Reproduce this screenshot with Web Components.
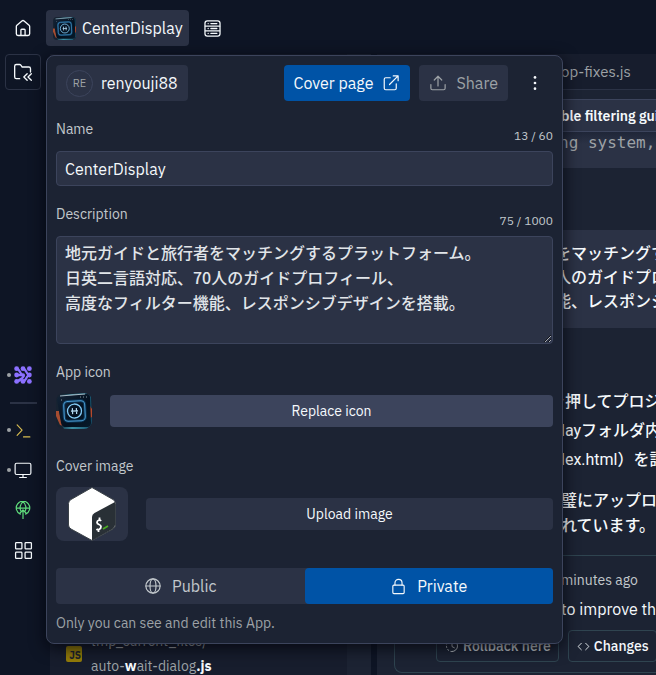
<!DOCTYPE html>
<html lang="en">
<head>
<meta charset="utf-8">
<title>CenterDisplay</title>
<style>
:root{--root:#0e1525;--panel:#1c2333;--raised:#2b3245;--line:#3c445c;--text:#f5f9fc;--dim:#c2c8cc;--faint:#9da2a6;--blue:#0053a6}
html,body{margin:0;height:100%;overflow:hidden;background:var(--root)}
body{font:16px/24px "IBM Plex Sans",Roboto,"Noto Sans CJK JP",sans-serif;color:var(--text)}
</style>
</head>
<body>
<app-shell></app-shell>
<script>
const base = `<style>
*{box-sizing:border-box}
button,input,textarea{font:inherit;color:inherit;margin:0}
button{border:0;background:none;padding:0;display:flex;align-items:center;justify-content:center;cursor:pointer}
svg{display:block;flex:none}
</style>`;
const define = (name, html) => customElements.define(name, class extends HTMLElement {
  constructor() {
    super();
    this.attachShadow({ mode: 'open' }).innerHTML = base + html;
  }
});

const icons = {
  home: '<path d="M4 10.2a2 2 0 0 1 .7-1.5l6-5.2a2 2 0 0 1 2.6 0l6 5.2a2 2 0 0 1 .7 1.5V19a2 2 0 0 1-2 2H6a2 2 0 0 1-2-2zM9.5 21v-6.5a1 1 0 0 1 1-1h3a1 1 0 0 1 1 1V21"/>',
  server: '<rect x="2.5" y="2.5" width="19" height="19" rx="3"/><path d="M3 9h18M3 15h18M6.5 5.8h.1M10 5.8h7.500M6.500 12h.1M10 12h7.500M6.500 18.2h.1M10 18.2h7.500"/>',
  folder: '<path d="M8 20H4a2 2 0 0 1-2-2V5a2 2 0 0 1 2-2h3.8a2 2 0 0 1 1.6.8L11 6h8a2 2 0 0 1 2 2v4M17 14l-4 4 4 4M22 14l-4 4 4 4"/>',
  external: '<path d="M11 5H5a2 2 0 0 0-2 2v12a2 2 0 0 0 2 2h12a2 2 0 0 0 2-2v-6M15 2.5h6.5V9M21.500 2.500 10 14"/>',
  share: '<path d="M2.500 14v5a2 2 0 0 0 2 2h15a2 2 0 0 0 2-2v-5M12 16V3M7 8l5-5 5 5"/>',
  globe: '<circle cx="12" cy="12" r="9.500"/><ellipse cx="12" cy="12" rx="4" ry="9.500"/><path d="M2.500 12h19"/>',
  lock: '<rect x="4" y="10" width="16" height="12" rx="1.500"/><path d="M7 10V7a5 5 0 0 1 10 0v3"/>',
  dots: '<g fill="currentColor" stroke="none"><circle cx="12" cy="4.500" r="1.800"/><circle cx="12" cy="12" r="1.800"/><circle cx="12" cy="19.500" r="1.800"/></g>',
  shell: '<path d="m3 4 7 7.500L3 19M12 21h9"/>',
  monitor: '<rect x="1.500" y="3" width="21" height="15" rx="2"/><path d="M12 18v4M7.500 22h9"/>',
  deploy: '<path d="M8.500 17.500A9 9 0 1 1 15.500 17.500M3 9.500h18M9.500 14c-2.500-4-1.500-10 2.500-13M14.500 14c2.500-4 1.500-10-2.500-13M12 24V12M8 16l4-4 4 4"/>',
  grid: '<rect x="2" y="2" width="8" height="8" rx="1"/><rect x="14" y="2" width="8" height="8" rx="1"/><rect x="2" y="14" width="8" height="8" rx="1"/><rect x="14" y="14" width="8" height="8" rx="1"/>',
  code: '<path d="m8 6-6 6 6 6M16 6l6 6-6 6"/>',
  history: '<path d="M12 2.500a9.500 9.500 0 0 1 0 19"/><path d="M12 21.500a9.500 9.500 0 0 1 0-19" stroke-dasharray="2 4"/><path d="M12 7v6l4 2"/>',
  agent: '<g stroke-width="3"><path d="M3.500 3.500C8 3.500 8 12 12 12S8 20.500 3.500 20.500M12 3.500c4.500 0 4.500 8.500 8.500 8.500-4 0-4 8.500-8.500 8.500M3.500 12H12"/></g><g fill="currentColor" stroke="none"><circle cx="3.500" cy="3.500" r="3.200"/><circle cx="12" cy="3.500" r="3.200"/><circle cx="20.500" cy="3.500" r="3.200"/><circle cx="3.500" cy="12" r="3.200"/><circle cx="12" cy="12" r="2.500"/><circle cx="20.500" cy="12" r="3.200"/><circle cx="3.500" cy="20.500" r="3.200"/><circle cx="12" cy="20.500" r="3.200"/><circle cx="20.500" cy="20.500" r="3.200"/></g>'
};
customElements.define('ui-icon', class extends HTMLElement {
  constructor() { super(); this.attachShadow({ mode: 'open' }); }
  connectedCallback() {
    const size = this.getAttribute('size') || 20;
    this.shadowRoot.innerHTML = `<style>:host{display:block;flex:none}svg{display:block}</style>
    <svg aria-hidden="true" width="${size}" height="${size}" viewBox="0 0 24 24" fill="none" stroke="currentColor" stroke-width="1.600" stroke-linecap="round" stroke-linejoin="round">${icons[this.getAttribute('name')]}</svg>`;
  }
});

define('app-picture', `<style>:host{display:block;flex:none;width:36px;height:36px;border-radius:8px;overflow:hidden}svg{width:100%;height:100%}</style>
<svg viewBox="0 0 36 36" aria-hidden="true">
<defs><linearGradient id="tile" x1="0" y1="0" x2="1" y2="1"><stop offset="0" stop-color="#142437"/><stop offset=".6" stop-color="#03101f"/><stop offset="1" stop-color="#071a2a"/></linearGradient>
<linearGradient id="edge" x1="0" x2="1"><stop offset="0" stop-color="#10283a"/><stop offset=".4" stop-color="#3c8fa3"/><stop offset="1" stop-color="#15506b"/></linearGradient></defs>
<rect width="36" height="36" fill="#172331"/>
<path d="M4 2 30 0l5 3 1 28-5 5H8l-5-8z" fill="url(#edge)"/>
<path d="M0 18h3l2 9 3 6-4-1-4-9z" fill="#a64c30"/><path d="M34 13l2 3v8l-2 1z" fill="#b5492c"/>
<path d="M1 7q0-3 3-4L31 1q3 0 3 3l1 26q0 3-3 4L9 34q-3 0-4-4z" fill="url(#tile)"/>
<path d="M4 3 29 1" stroke="#a9bac5" stroke-width="1"/>
<g fill="none" transform="rotate(-3 19 18)"><rect x="8" y="8" width="21" height="20" rx="4" stroke="#1677ba" stroke-width="3" opacity=".35"/><rect x="8" y="8" width="21" height="20" rx="4" stroke="#4d9bd0"/><circle cx="18.500" cy="18" r="7" stroke="#82c9f3" stroke-width="1.300"/><path d="M16.500 15v6M20.500 15v6M15 18h7" stroke="#b5dbf2" stroke-width="1.200"/></g>
<path d="M24 4h1M27 4h1M30 4h1M5 7h1" stroke="#8395a1"/>
</svg>`);

define('bash-cover', `<style>:host{display:flex;justify-content:center;flex:none;width:72px;height:54px;border-radius:8px;background:var(--raised)}</style>
<svg width="48" height="54" viewBox="0 0 48 54" aria-hidden="true"><path d="M24 .5 45 12.500q2.500 1.500 2.500 4V38q0 2.500-2.500 4L24 53.500 3 42Q.5 40.500.5 38V16.500q0-2.500 2.500-4z" fill="#fff" stroke="#3b4248"/><path d="M47 15v23q0 2.500-2.500 4L24 53.500V30q0-2.500 2.500-4z" fill="#293036"/><path d="m35 42 5-3" stroke="#4cad24" stroke-width="1.800"/><path d="M33 34c-1-2-4-.5-4 1.500 0 2.500 4 1.500 4 4s-3 4-4.500 2.500M31.500 30.500v3M30.500 42v3" fill="none" stroke="#fff" stroke-width="1.800"/></svg>`);

define('top-bar', `<style>
:host{display:flex;height:54px;align-items:flex-start;padding:10px 0 0 15px}
button{height:36px}.home{width:16px}.app{background:var(--raised);border-radius:4px;gap:6px;padding:0 6px 0 7px;margin-left:15px}.server{margin-left:14px}
app-picture{width:23px;height:23px;border-radius:4px}</style>
<button class="home" aria-label="Home"><ui-icon name="home"></ui-icon></button>
<button class="app"><app-picture></app-picture>CenterDisplay</button>
<button class="server" aria-label="Storage"><ui-icon name="server" size="19"></ui-icon></button>`);

define('tool-rail', `<style>
:host{display:flex;flex-direction:column;align-items:center;width:46px;flex:none}
.files{width:36px;height:36px;border:1px solid var(--raised);border-radius:4px;margin-bottom:265px}
.tool{width:46px;height:40px;display:grid;grid-template-columns:6px 20px;justify-content:start;justify-items:center;align-items:center;padding-left:7px}
.tool::before{content:"";width:4px;height:4px;justify-self:start}.dot::before{border-radius:50%;background:var(--faint)}
hr{width:27px;height:2px;border:0;background:var(--raised);margin:7px 0 6px}
.agent{color:#8b70ff}.shell{color:#d8bd50}.deploy{color:#5fdc7b}</style>
<button class="files" aria-label="Files"><ui-icon name="folder"></ui-icon></button>
<button class="tool dot agent" aria-label="Agent"><ui-icon name="agent" size="18"></ui-icon></button><hr>
<button class="tool dot shell" aria-label="Shell"><ui-icon name="shell" size="17"></ui-icon></button>
<button class="tool dot" aria-label="Preview"><ui-icon name="monitor" size="18"></ui-icon></button>
<button class="tool deploy" aria-label="Deploy"><ui-icon name="deploy" size="18"></ui-icon></button>
<button class="tool" aria-label="All tools"><ui-icon name="grid" size="19"></ui-icon></button>`);

define('file-pane', `<style>
:host{display:block;flex:1;min-width:0;margin:0 6px 0 4px;background:linear-gradient(to left,var(--panel) 24px,#171d2d 24px);font-size:14px;line-height:25px;color:var(--faint);padding:575px 0 0 16px;overflow:hidden}
.row{display:flex;align-items:center;gap:9px}.js{width:16px;height:16px;border-radius:2px;background:#947c09;color:#20242b;font-size:10px;line-height:20px;text-align:right;font-weight:700;padding-right:1px}b{color:var(--text)}</style>
<div class="row"><span class="js">JS</span><div><div>tmp_current_files/</div><div>auto-<b>w</b>ait-dialog<b>.js</b></div></div></div>`);

define('chat-pane', `<style>
:host{display:flex;flex-direction:column;flex:0 0 279px;background:var(--panel);white-space:nowrap;overflow:hidden}
.in{padding-left:184px}
.tab{height:36px;flex:none;background:#171d2d;border-bottom:1px solid var(--raised);line-height:36px;font-size:15px;color:var(--faint)}
.title{margin-top:9px;height:33px;flex:none;border:solid var(--line);border-width:1px 0;background:var(--raised);font-size:14px;font-weight:600;line-height:32px}
.code{height:36px;flex:none;background:linear-gradient(#1f2638,var(--raised) 12px);font:500 16px/22px "DejaVu Sans Mono",monospace;color:var(--faint);padding-left:182px}
.msg{margin-top:62px;height:98px;flex:none;background:var(--raised);padding:12px 0 0 178px;line-height:24px}
.msg,.reply{font-family:Roboto,"Noto Sans CJK JP",sans-serif;font-weight:500}
.reply{padding-top:59px;height:227px;flex:none;line-height:29px}.reply p{margin:0 0 14px}.reply p:first-child{text-indent:-12px}.reply p+p{line-height:25px}
.latin{font-weight:400}
.card{flex:none;margin-left:17px;border:1px solid #2f4450;border-right:0;border-radius:0 0 0 8px;height:118px}
.card .in{padding-left:166px}.time{margin-top:12px;font-size:14px;color:var(--dim)}.sum{margin-top:5px}
.actions{display:flex;gap:9px;margin:9px 0 0 41px}.actions button{height:32px;flex:none;border:1px solid #2f4450;border-radius:4px;font-size:14px;font-weight:500;gap:4px;padding:0 7px 0 8px}.actions button:first-child{color:var(--dim)}</style>
<div class="tab in">op-fixes.js</div>
<div class="title in">ble filtering guide</div>
<div class="code">ng system,</div>
<div class="msg"><div>をマッチングする</div><div>人のガイドプロ</div><div>能、レスポンシ</div></div>
<div class="reply in"><p>を押してプロジェ<br><span class="latin">lay</span>フォルダ内<br><span class="latin">lex.html</span>）を詳</p><p>璧にアップロード<br>れています。</p></div>
<div class="card"><div class="in time">minutes ago</div><div class="in sum">to improve the</div>
<div class="actions"><button><ui-icon name="history" size="14"></ui-icon>Rollback here</button><button><ui-icon name="code" size="13"></ui-icon>Changes</button></div></div>`);

define('form-field', `<style>
:host{display:block;margin-top:16px}.head{display:flex;justify-content:space-between;height:26px;margin-bottom:8px;font-size:14px;line-height:25px;color:var(--dim)}
.head span{font-size:12px;line-height:14px;align-self:flex-end}</style>
<div class="head"><slot name="label"></slot><span><slot name="count"></slot></span></div><slot></slot>`);

define('media-field', `<style>
:host{display:block;margin-top:16px}.label{font-size:14px;line-height:25px;color:var(--dim);margin-bottom:8px}.row{display:flex;align-items:center;gap:18px}
button{flex:1;height:32px;border-radius:4px;background:var(--fill,var(--raised));font-size:14px}</style>
<div class="label"><slot name="label"></slot></div><div class="row"><slot name="picture"></slot><button><slot></slot></button></div>`);

define('visibility-toggle', `<style>
:host{display:flex;height:36px;margin-top:27px;border-radius:4px;background:var(--raised)}
label{flex:1 1 0;display:flex;align-items:center;justify-content:center;gap:10px;border-radius:4px;color:var(--dim);cursor:pointer}
label:has(:checked){background:var(--blue);color:var(--text)}
input{appearance:none;width:0;height:0;position:absolute}</style>
<label><input type="radio" name="v"><ui-icon name="globe" size="18"></ui-icon>Public</label>
<label><input type="radio" name="v" checked><ui-icon name="lock" size="17"></ui-icon>Private</label>`);

define('app-popover', `<style>
:host{display:block;position:absolute;left:46px;right:93px;top:55px;background:var(--panel);border:1px solid var(--line);border-radius:8px;padding:9px;box-shadow:0 4px 16px #02040acc}
.top{display:flex;align-items:center}.top button{height:36px;border-radius:4px;background:var(--raised)}
.top .user{gap:8px;padding:0 10px 0 10px}.avatar{width:27px;height:27px;border:1px solid var(--line);border-radius:50%;font-size:11px;line-height:25px;color:var(--faint)}
.top .cover{margin-left:auto;background:var(--blue);gap:9px;padding:0 10px}.top .share{margin-left:9px;gap:9px;padding:0 10px;color:var(--faint)}.top .more{width:36px;margin-left:9px;background:none}
input,textarea{display:block;width:100%;background:var(--raised);border:1px solid var(--line);border-radius:4px;padding:0 8px}
input{height:35px}textarea{height:108px;line-height:25px;padding:3px 8px;resize:vertical;font-family:"Noto Sans CJK JP",sans-serif;font-weight:500;color:#e1e5e9}
.icon{--fill:#3c445c}.coverfield{margin-top:25px}p{margin:8px 0 0;font-size:14px;line-height:22px;color:var(--faint)}</style>
<div class="top"><button class="user"><span class="avatar">RE</span>renyouji88</button><button class="cover">Cover page<ui-icon name="external" size="18"></ui-icon></button><button class="share" disabled><ui-icon name="share" size="18"></ui-icon>Share</button><button class="more" aria-label="More"><ui-icon name="dots" size="18"></ui-icon></button></div>
<form-field><label slot="label" for="name">Name</label><span slot="count">13 / 60</span><input id="name" value="CenterDisplay"></form-field>
<form-field><label slot="label" for="desc">Description</label><span slot="count">75 / 1000</span><textarea id="desc" spellcheck="false">地元ガイドと旅行者をマッチングするプラットフォーム。
日英二言語対応、70人のガイドプロフィール、
高度なフィルター機能、レスポンシブデザインを搭載。</textarea></form-field>
<media-field class="icon"><span slot="label">App icon</span><app-picture slot="picture"></app-picture>Replace icon</media-field>
<media-field class="coverfield"><span slot="label">Cover image</span><bash-cover slot="picture"></bash-cover>Upload image</media-field>
<visibility-toggle></visibility-toggle><p>Only you can see and edit this App.</p>`);

define('app-shell', `<style>:host{display:flex;flex-direction:column;height:100vh;position:relative;overflow:hidden}main{flex:1;display:flex;min-height:0}</style>
<top-bar></top-bar><main><tool-rail></tool-rail><file-pane></file-pane><chat-pane></chat-pane></main><app-popover></app-popover>`);
</script>
</body>
</html>
